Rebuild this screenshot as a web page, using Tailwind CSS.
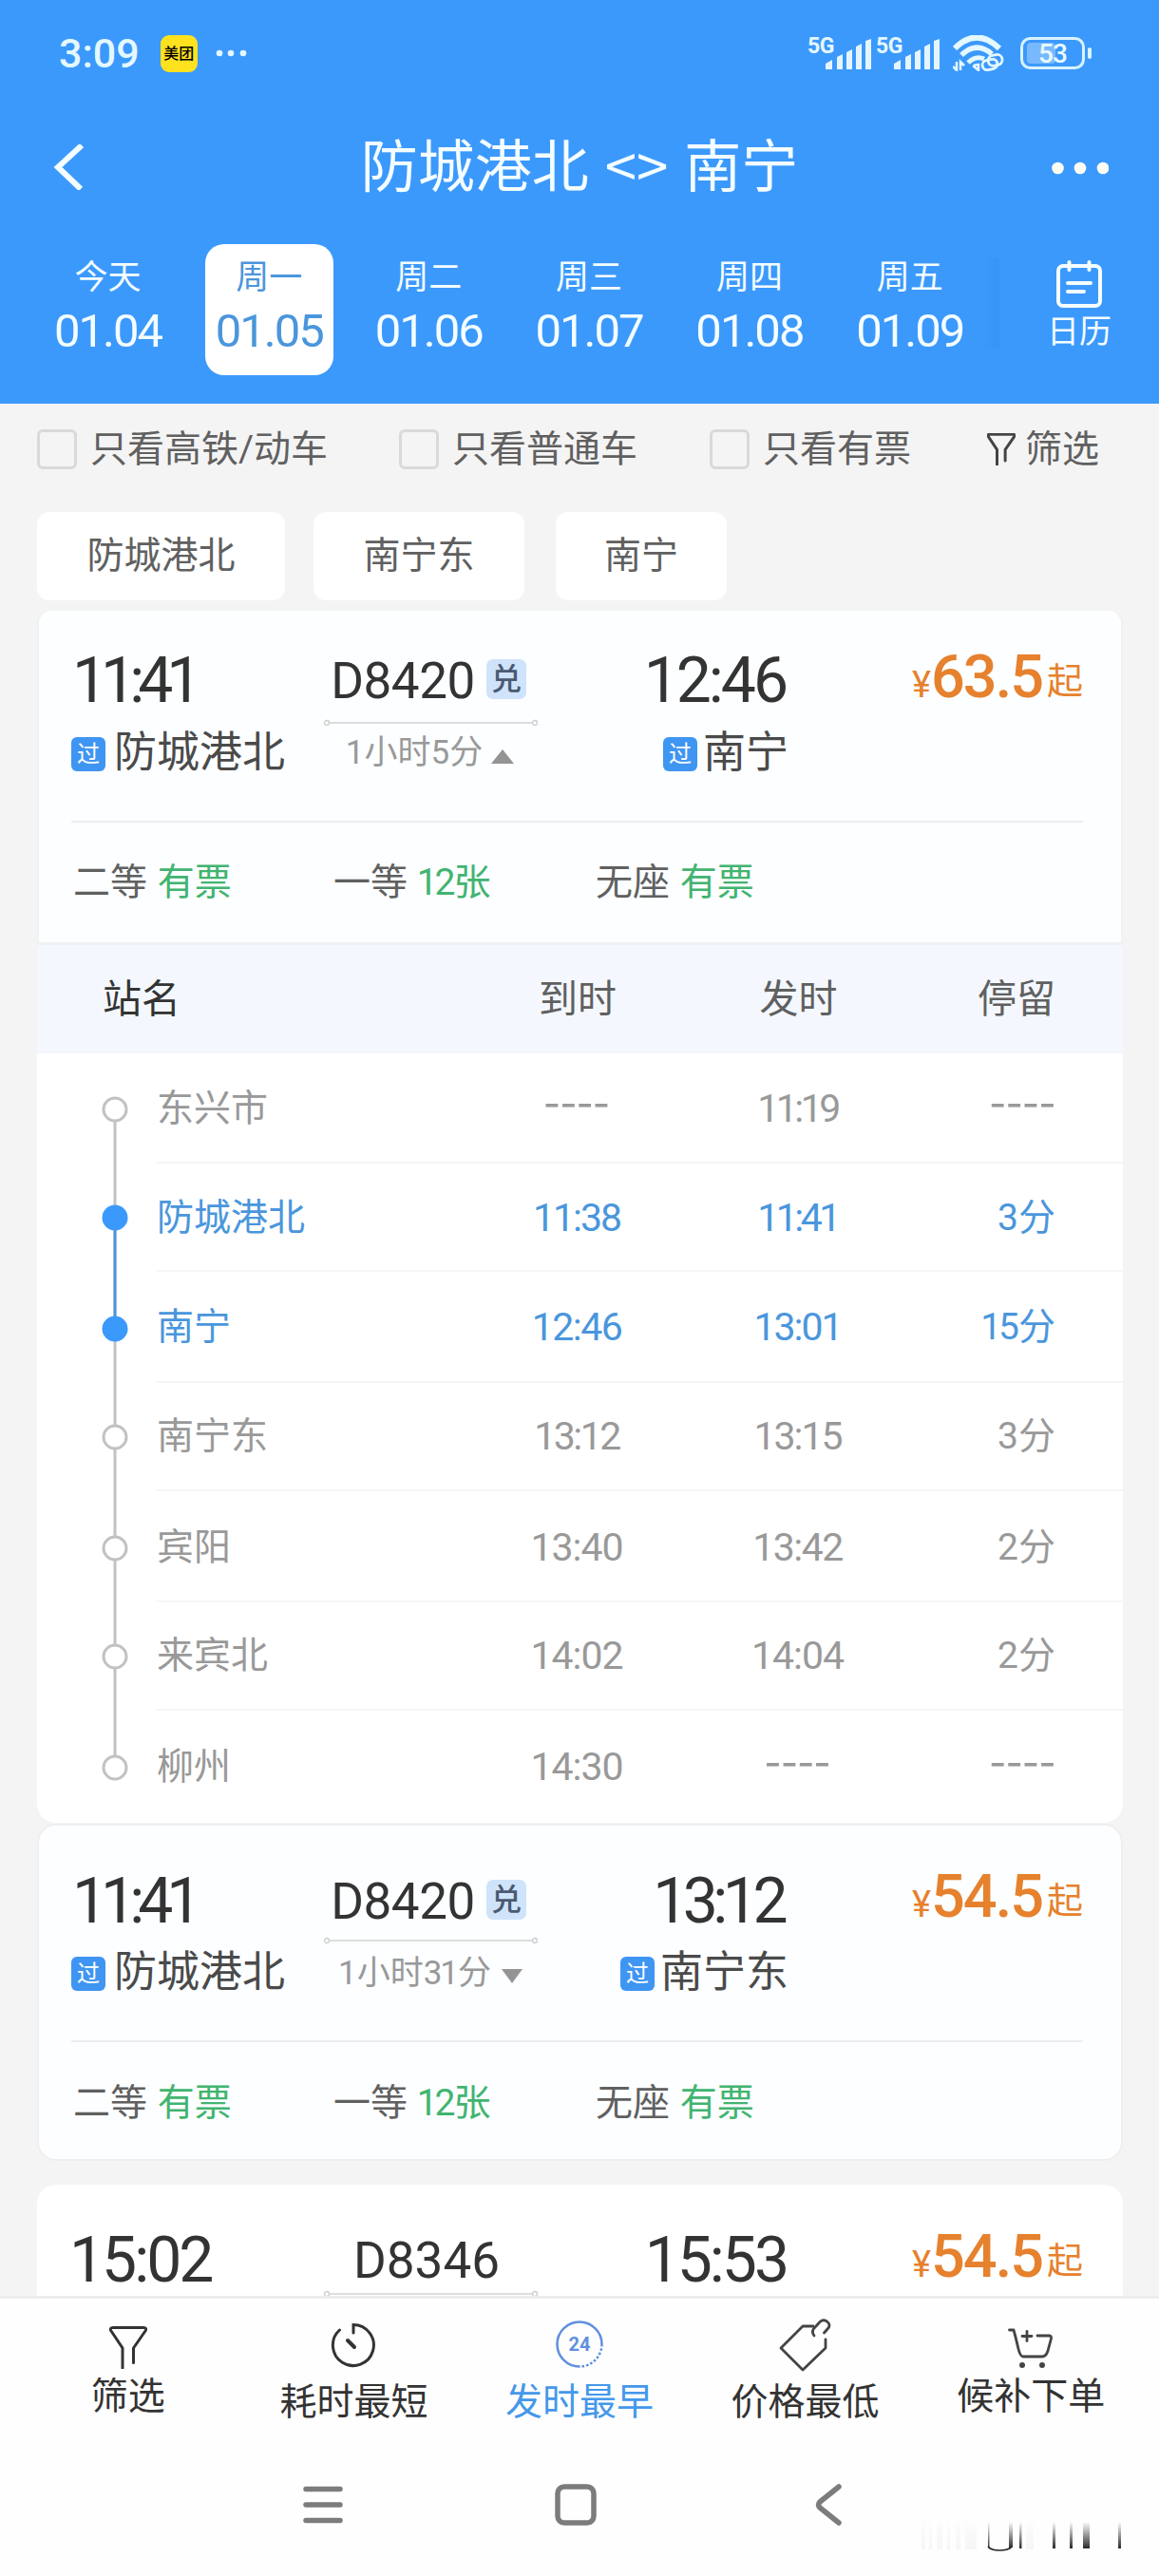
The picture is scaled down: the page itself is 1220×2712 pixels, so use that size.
<!DOCTYPE html>
<html lang="zh-CN">
<head>
    <meta charset="UTF-8">
    <meta name="viewport" content="width=device-width, initial-scale=1.0">
    <title>防城港北 - 南宁</title>
    <script src="https://cdn.jsdelivr.net/npm/@tailwindcss/browser@4"></script>
    <style>
        body {
            font-family: Roboto, 'Noto Sans CJK SC', sans-serif;
        }
    </style>
</head>
<body class="bg-[#f4f4f4] w-[1220px] h-[2712px] overflow-hidden flex flex-col leading-none text-[#333]">

    <svg class="hidden">
        <symbol id="funnel" viewBox="0 0 40 45"><path d="M14 44V23L2 5Q0 1.500 4 1.500H36Q40 1.500 38 5L25.500 23V38.500" fill="none" stroke="currentColor" stroke-linecap="round" stroke-linejoin="round"/></symbol>
        <symbol id="bars" viewBox="0 0 48 32"><path d="M0 32V26L7 22V32ZM12 32V19L18 16V32ZM22 32V14L28 11V32ZM32 32V8L38 5V32ZM42 32V2L48 0V32Z" fill="#e4f5ff"/></symbol>
        <symbol id="route" viewBox="0 0 227 8"><path d="M7 4H220" stroke="#d2d2d2" stroke-width="1.500"/><circle cx="4" cy="4" r="2.500" fill="none" stroke="#cdcdcd" stroke-width="1.300"/><circle cx="223" cy="4" r="2.500" fill="none" stroke="#cdcdcd" stroke-width="1.300"/></symbol>
    </svg>

    <header class="h-[425px] shrink-0 bg-[#3c99fc] text-[#f4fdff]">
        <!-- status bar -->
        <div class="h-[112px] pl-[62px] pr-[71px] flex items-center text-[#e4f8ff]">
            <span class="text-[43px] font-medium mt-[1px]">3:09</span>
            <span class="ml-[22px] size-[39px] rounded-[9px] bg-[#ffe21f] text-black text-[16px] font-medium flex items-center justify-center pt-[2px]">美团</span>
            <svg class="ml-[19px] w-[34px] h-[8px]" viewBox="0 0 34 8" fill="currentColor"><circle cx="4" cy="4" r="3.300"/><circle cx="16" cy="4" r="3.300"/><circle cx="29" cy="4" r="3.300"/></svg>
            <div class="ml-auto flex items-center">
                <div class="relative w-[72px] h-[38px]">
                    <span class="absolute left-[-2px] top-0 text-[23px] font-bold tracking-[-0.5px]">5G</span>
                    <svg class="absolute left-[17px] top-[4px] w-[48px] h-[32px]"><use href="#bars"/></svg>
                </div>
                <div class="relative w-[79px] h-[38px]">
                    <span class="absolute left-[-2px] top-0 text-[23px] font-bold tracking-[-0.5px]">5G</span>
                    <svg class="absolute left-[17px] top-[4px] w-[48px] h-[32px]"><use href="#bars"/></svg>
                </div>
                <svg class="w-[54px] h-[38px]" viewBox="0 0 54 38" fill="none" stroke="currentColor">
                    <path d="M2 14Q25-9 49 14" stroke-width="6"/>
                    <path d="M9 21Q25 6 41 20" stroke-width="5.500"/>
                    <path d="M16 29Q24 21 33 25" stroke-width="5"/>
                    <path d="M4 28V37L0 33M8 37V28L12 32M27 31Q22 31 22 33L27 37Z" stroke-width="2.500"/>
                    <rect x="31" y="26" width="16" height="10" rx="5" stroke-width="2.800" transform="rotate(-12 39 31)"/>
                    <rect x="37" y="21" width="15" height="11" rx="5.500" stroke-width="2.800" transform="rotate(-12 44 26)"/>
                </svg>
                <svg class="ml-[17px] w-[76px] h-[34px] mr-[-1px]" viewBox="0 0 76 34">
                    <rect x="1.500" y="1.500" width="65" height="31" rx="9" fill="none" stroke="#d8f3ff" stroke-width="3"/>
                    <rect x="7" y="6" width="30" height="22" rx="4" fill="#78b9fd"/>
                    <rect x="71" y="11" width="4" height="12" rx="2" fill="#d8f3ff"/>
                    <text x="34" y="27" text-anchor="middle" font-size="28" font-weight="500" fill="#e8faff" letter-spacing="-1">53</text>
                </svg>
            </div>
        </div>

        <!-- title -->
        <div class="h-[130px] px-[53px] flex items-center justify-between">
            <svg class="w-[38px] h-[48px] mt-[-2px]" viewBox="0 0 38 48" fill="none" stroke="currentColor" stroke-width="6"><path d="M33 1L8 24L32 47"/></svg>
            <h1 class="text-[60px] font-normal mr-[-22px] flex items-center">防城港北<span class="mx-[17px] font-['Noto_Sans_CJK_SC'] mt-[-11px]">&lt;&gt;</span>南宁</h1>
            <svg class="w-[60px] h-[14px]" viewBox="0 0 60 14" fill="#fdfdf4"><circle cx="6.500" cy="7" r="6.300"/><circle cx="30" cy="7" r="6.300"/><circle cx="54" cy="7" r="6.300"/></svg>
        </div>

        <!-- dates -->
        <div class="h-[183px] pl-[29px] pt-[15px] flex">
            <div class="w-[169px] h-[138px] flex flex-col items-center pt-[18px]"><span class="text-[35px]">今天</span><span class="text-[49px] mt-[14px] tracking-[-2px]">01.04</span></div>
            <div class="w-[169px] pl-[18px] pr-[16px]">
                <div class="h-[138px] bg-white rounded-[20px] text-[#4a96dc] flex flex-col items-center pt-[18px]"><span class="text-[35px]">周一</span><span class="text-[49px] mt-[14px] tracking-[-2px]">01.05</span></div>
            </div>
            <div class="w-[169px] h-[138px] flex flex-col items-center pt-[18px]"><span class="text-[35px]">周二</span><span class="text-[49px] mt-[14px] tracking-[-2px]">01.06</span></div>
            <div class="w-[169px] h-[138px] flex flex-col items-center pt-[18px]"><span class="text-[35px]">周三</span><span class="text-[49px] mt-[14px] tracking-[-2px]">01.07</span></div>
            <div class="w-[169px] h-[138px] flex flex-col items-center pt-[18px]"><span class="text-[35px]">周四</span><span class="text-[49px] mt-[14px] tracking-[-2px]">01.08</span></div>
            <div class="w-[169px] h-[138px] flex flex-col items-center pt-[18px]"><span class="text-[35px]">周五</span><span class="text-[49px] mt-[14px] tracking-[-2px]">01.09</span></div>
            <div class="w-[18px] -ml-[8px] h-[96px] mt-[14px] bg-linear-to-r from-[#3c99fc] to-[#3893f5]"></div>
            <div class="w-[168px] flex flex-col items-center pt-[17px]">
                <svg class="w-[50px] h-[50px]" viewBox="0 0 50 50" fill="none" stroke="currentColor" stroke-width="4" stroke-linecap="round"><rect x="3" y="6" width="44" height="42" rx="5"/><path d="M14.500 2V10M35.500 2V10M13 24H37M13 33H30"/></svg>
                <span class="text-[34px] mt-[8px]">日历</span>
            </div>
        </div>
    </header>

    <!-- filters -->
    <div class="h-[96px] shrink-0 pl-[39px] flex items-center text-[39px] text-[#606060]">
        <span class="size-[42px] border-3 border-[#d9d9d9] rounded-[6px]"></span>
        <span class="ml-[14px] w-[325px]">只看高铁/动车</span>
        <span class="size-[42px] border-3 border-[#d9d9d9] rounded-[6px]"></span>
        <span class="ml-[14px] w-[271px]">只看普通车</span>
        <span class="size-[42px] border-3 border-[#d9d9d9] rounded-[6px]"></span>
        <span class="ml-[14px] w-[236px]">只看有票</span>
        <svg class="w-[30px] h-[34px] text-[#444]" stroke-width="4"><use href="#funnel"/></svg>
        <span class="ml-[10px]">筛选</span>
    </div>

    <div class="h-[122px] shrink-0 pl-[39px] pt-[18px] flex text-[39px] text-[#606060]">
        <span class="w-[261px] h-[93px] bg-white rounded-[13px] flex items-center justify-center">防城港北</span>
        <span class="w-[222px] h-[93px] bg-white rounded-[13px] flex items-center justify-center ml-[30px]">南宁东</span>
        <span class="w-[180px] h-[93px] bg-white rounded-[13px] flex items-center justify-center ml-[33px]">南宁</span>
    </div>

    <main class="h-[1774px] shrink-0 pl-[39px] pr-[38px] overflow-hidden">

        <!-- train, expanded -->
        <div class="h-[352px] pl-[34px] pr-[40px] pt-[42px] border-x-2 border-b-3 border-[#eff1f2] bg-[#fcfeff] rounded-t-[14px]">
            <div class="grid grid-cols-[262px_233px_260px_310px] h-[179px]">
                <div>
                    <div class="h-[64px] pl-[1px] flex items-center text-[66px] tracking-[-7px]">11:41</div>
                    <div class="h-[48px] mt-[19px] flex items-center text-[45px] text-[#4a4a4a]"><span class="size-[36px] mr-[9px] mt-[4px] rounded-[6px] bg-[#3f95f2] text-white text-[24px] flex items-center justify-center">过</span>防城港北</div>
                </div>
                <div class="flex flex-col items-center">
                    <div class="h-[64px] pr-[5px] flex items-center text-[53px] tracking-[-0.5px]">D8420<span class="size-[42px] ml-[12px] mb-[4px] rounded-[7px] bg-[#cfe3fb] text-[#4a5a70] text-[32px] font-medium flex items-center justify-center">兑</span></div>
                    <svg class="w-[227px] h-[8px] mt-[8px]"><use href="#route"/></svg>
                    <div class="h-[48px] mt-[3px] pr-[2px] flex items-center text-[35px] text-[#999]">1小时5分<svg class="w-[24px] h-[15px] ml-[9px] mt-[8px]" viewBox="0 0 24 15"><path d="M12 0L24 15H0Z" fill="#949494"/></svg></div>
                </div>
                <div class="flex flex-col items-end">
                    <div class="h-[64px] pr-[3px] flex items-center text-[66px] tracking-[-3px]">12:46</div>
                    <div class="h-[48px] mt-[19px] flex items-center text-[45px] text-[#4a4a4a]"><span class="size-[36px] mr-[6px] mt-[4px] rounded-[6px] bg-[#3f95f2] text-white text-[24px] flex items-center justify-center">过</span>南宁</div>
                </div>
                <div class="h-[58px] mt-[-4px] flex items-baseline justify-end text-[#e6812d]"><span class="text-[38px]">¥</span><span class="text-[63px] font-medium tracking-[-2px]">63.5</span><span class="text-[38px] ml-[5px] -translate-y-[4px]">起</span></div>
            </div>
            <div class="h-[128px] border-t-2 border-[#ebedef] flex items-center text-[39px] text-[#606060]">
                <span class="w-[276px] pl-[2px]">二等 <span class="text-[#42b470] ml-[1px]">有票</span></span>
                <span class="w-[276px]">一等 <span class="text-[#42b470]"><span class="tracking-[-3px] mr-[1px]">12</span>张</span></span>
                <span>无座 <span class="text-[#42b470] ml-[1px]">有票</span></span>
            </div>
        </div>

        <!-- stop list -->
        <div class="bg-white rounded-b-[20px] h-[924px] mb-[1px]">
            <div class="h-[114px] bg-[#f4f8fe] pl-[69px] grid grid-cols-[375px_250px_215px_163px] items-center text-[41px] text-[#606060]">
                <span class="text-[#333]">站名</span><span class="text-center">到时</span><span class="text-center">发时</span><span class="text-right">停留</span>
            </div>
            <div class="relative text-[39px] text-[#999]">
                <svg class="absolute left-[66px] top-0 w-[32px] h-[810px]" viewBox="0 0 32 810">
                    <path d="M16 59V752" stroke="#c2c2c2" stroke-width="3"/>
                    <path d="M16 173V290" stroke="#4a96dc" stroke-width="3"/>
                    <g fill="#fff" stroke="#c2c2c2" stroke-width="3"><circle cx="16" cy="59" r="12"/><circle cx="16" cy="404" r="12"/><circle cx="16" cy="521" r="12"/><circle cx="16" cy="635" r="12"/><circle cx="16" cy="752" r="12"/></g>
                    <g fill="#3c99fc"><circle cx="16" cy="173" r="13.500"/><circle cx="16" cy="290" r="13.500"/></g>
                </svg>
                <div class="ml-[126px] pt-[2px] h-[116px] border-b-2 border-[#f5f5f5] grid grid-cols-[317px_250px_215px_164px] items-center">
                    <span>东兴市</span><span class="text-center font-['Noto_Sans_CJK_SC'] text-[50px] pb-[22px]">----</span><span class="text-center text-[41px] tracking-[-3.500px]">11:19</span><span class="text-right font-['Noto_Sans_CJK_SC'] text-[50px] pb-[22px]">----</span>
                </div>
                <div class="ml-[126px] pt-[2px] h-[114px] border-b-2 border-[#f5f5f5] grid grid-cols-[317px_250px_215px_164px] items-center text-[#4a96dc]">
                    <span>防城港北</span><span class="text-center text-[41px] tracking-[-2px]">11:38</span><span class="text-center text-[41px] tracking-[-3.500px]">11:41</span><span class="text-right">3分</span>
                </div>
                <div class="ml-[126px] pt-[2px] h-[117px] border-b-2 border-[#f5f5f5] grid grid-cols-[317px_250px_215px_164px] items-center text-[#4a96dc]">
                    <span>南宁</span><span class="text-center text-[41px] tracking-[-1.500px]">12:46</span><span class="text-center text-[41px] tracking-[-2px]">13:01</span><span class="text-right"><span class="tracking-[-3px] mr-[2px]">15</span>分</span>
                </div>
                <div class="ml-[126px] pt-[1px] h-[114px] border-b-2 border-[#f5f5f5] grid grid-cols-[317px_250px_215px_164px] items-center">
                    <span>南宁东</span><span class="text-center text-[41px] tracking-[-2.500px]">13:12</span><span class="text-center text-[41px] tracking-[-2px]">13:15</span><span class="text-right">3分</span>
                </div>
                <div class="ml-[126px] pt-[3px] h-[117px] border-b-2 border-[#f5f5f5] grid grid-cols-[317px_250px_215px_164px] items-center">
                    <span>宾阳</span><span class="text-center text-[41px] tracking-[-1px]">13:40</span><span class="text-center text-[41px] tracking-[-1.500px]">13:42</span><span class="text-right">2分</span>
                </div>
                <div class="ml-[126px] pt-[1px] h-[114px] border-b-2 border-[#f5f5f5] grid grid-cols-[317px_250px_215px_164px] items-center">
                    <span>来宾北</span><span class="text-center text-[41px] tracking-[-1px]">14:02</span><span class="text-center text-[41px] tracking-[-1px]">14:04</span><span class="text-right">2分</span>
                </div>
                <div class="ml-[126px] pt-[2px] h-[117px] grid grid-cols-[317px_250px_215px_164px] items-center">
                    <span>柳州</span><span class="text-center text-[41px] tracking-[-1px]">14:30</span><span class="text-center font-['Noto_Sans_CJK_SC'] text-[50px] pb-[22px]">----</span><span class="text-right font-['Noto_Sans_CJK_SC'] text-[50px] pb-[22px]">----</span>
                </div>
            </div>
        </div>

        <!-- train -->
        <div class="h-[355px] pl-[34px] pr-[40px] pt-[48px] border-2 border-[#efefef] bg-[#fcfeff] rounded-[20px]">
            <div class="grid grid-cols-[262px_233px_260px_310px] h-[178px]">
                <div>
                    <div class="h-[64px] pl-[1px] flex items-center text-[66px] tracking-[-7px]">11:41</div>
                    <div class="h-[48px] mt-[18px] flex items-center text-[45px] text-[#4a4a4a]"><span class="size-[36px] mr-[9px] mt-[4px] rounded-[6px] bg-[#3f95f2] text-white text-[24px] flex items-center justify-center">过</span>防城港北</div>
                </div>
                <div class="flex flex-col items-center">
                    <div class="h-[64px] pr-[5px] flex items-center text-[53px] tracking-[-0.5px]">D8420<span class="size-[42px] ml-[12px] mb-[4px] rounded-[7px] bg-[#cfe3fb] text-[#4a5a70] text-[32px] font-medium flex items-center justify-center">兑</span></div>
                    <svg class="w-[227px] h-[8px] mt-[5px]"><use href="#route"/></svg>
                    <div class="h-[48px] mt-[6px] pr-[1px] flex items-center text-[35px] text-[#999]"><span>1小时<span class="tracking-[-2px] mr-[1px]">31</span>分</span><svg class="w-[22px] h-[15px] ml-[11px] mt-[6px]" viewBox="0 0 22 15"><path d="M0 0H22L11 15Z" fill="#949494"/></svg></div>
                </div>
                <div class="flex flex-col items-end">
                    <div class="h-[64px] pr-[6px] flex items-center text-[66px] tracking-[-5.5px]">13:12</div>
                    <div class="h-[48px] mt-[18px] flex items-center text-[45px] text-[#4a4a4a]"><span class="size-[36px] mr-[6px] mt-[4px] rounded-[6px] bg-[#3f95f2] text-white text-[24px] flex items-center justify-center">过</span>南宁东</div>
                </div>
                <div class="h-[58px] mt-[-5px] flex items-baseline justify-end text-[#e6812d]"><span class="text-[38px]">¥</span><span class="text-[63px] font-medium tracking-[-2px]">54.5</span><span class="text-[38px] ml-[5px] -translate-y-[4px]">起</span></div>
            </div>
            <div class="h-[125px] pt-[6px] border-t-2 border-[#ebedef] flex items-center text-[39px] text-[#606060]">
                <span class="w-[276px] pl-[2px]">二等 <span class="text-[#42b470] ml-[1px]">有票</span></span>
                <span class="w-[276px]">一等 <span class="text-[#42b470]"><span class="tracking-[-3px] mr-[1px]">12</span>张</span></span>
                <span>无座 <span class="text-[#42b470] ml-[1px]">有票</span></span>
            </div>
        </div>

        <!-- train, cut by the bottom bar -->
        <div class="h-[200px] mt-[25px] px-[36px] pt-[48px] bg-white rounded-t-[20px]">
            <div class="grid grid-cols-[262px_233px_260px_310px]">
                <div class="h-[64px] flex items-center text-[66px] tracking-[-3px]"><span class="-ml-[2px]">15:02</span></div>
                <div class="flex flex-col items-center">
                    <div class="h-[64px] pr-[9px] flex items-center text-[53px]">D8346</div>
                    <svg class="w-[227px] h-[8px] -mt-[1px]"><use href="#route"/></svg>
                </div>
                <div class="h-[64px] pr-[2px] flex items-center justify-end text-[66px] tracking-[-3px]">15:53</div>
                <div class="h-[58px] mt-[-4px] flex items-baseline justify-end text-[#e6812d]"><span class="text-[38px]">¥</span><span class="text-[63px] font-medium tracking-[-2px]">54.5</span><span class="text-[38px] ml-[5px] -translate-y-[4px]">起</span></div>
            </div>
        </div>
    </main>

    <footer class="flex-1 bg-[#fefefe] border-t-3 border-[#ededed]">
        <div class="h-[150px] px-[16px] grid grid-cols-5 text-[39px]">
            <div class="flex flex-col items-center pt-[29px]">
                <svg class="w-[40px] h-[45px]" stroke-width="3"><use href="#funnel"/></svg>
                <span class="mt-[10px]">筛选</span>
            </div>
            <div class="flex flex-col items-center pt-[25px]">
                <svg class="w-[48px] h-[48px]" viewBox="0 0 48 48" fill="none" stroke="currentColor" stroke-width="3" stroke-linecap="round"><path d="M24 11V2.500A21.500 21.500 0 1 1 9.500 8"/><path d="M18 19L25 26" stroke-width="4"/></svg>
                <span class="mt-[17px]">耗时最短</span>
            </div>
            <div class="flex flex-col items-center pt-[23px] text-[#4598ea]">
                <svg class="w-[50px] h-[50px]" viewBox="0 0 50 50" fill="none" stroke="#6090de" stroke-width="2.500"><path d="M25 48.500A23.500 23.500 0 1 1 48.500 25"/><path d="M48.500 25A23.500 23.500 0 0 1 25 48.500" stroke-dasharray="2.500 2"/><text x="25" y="32" text-anchor="middle" font-size="20" font-weight="700" fill="#6090de" stroke="none">24</text></svg>
                <span class="mt-[17px]">发时最早</span>
            </div>
            <div class="flex flex-col items-center pt-[21px]">
                <svg class="w-[56px] h-[56px]" viewBox="0 0 56 56" fill="none" stroke="#444" stroke-width="2.800" stroke-linecap="round" stroke-linejoin="round"><path d="M36 8H25L2 31L25 54L49 31V22"/><path d="M37 18Q33 13 39 8L43 3.500Q47 0 51 3.500Q55 7 51 11L47.500 15"/></svg>
                <span class="mt-[13px]">价格最低</span>
            </div>
            <div class="flex flex-col items-center pt-[31px]">
                <svg class="w-[48px] h-[43px]" viewBox="0 0 48 43" fill="none" stroke="#444" stroke-width="2.800" stroke-linecap="round" stroke-linejoin="round"><path d="M1.500 2H6Q8 9 11 22Q13 30 16 30H36Q40 30 42 24L45.500 11Q46 8 43 8H31M15 8.500H25M20 3.500V13.500"/><circle cx="15" cy="39" r="1.600" fill="#333"/><circle cx="36" cy="39" r="1.600" fill="#333"/></svg>
                <span class="mt-[10px]">候补下单</span>
            </div>
        </div>

        <!-- system navigation -->
        <div class="relative h-[130px] pl-[318px] pt-[44px] flex text-[#7c7c7c]">
            <svg class="w-[44px] h-[46px]" viewBox="0 0 44 46" stroke="currentColor" stroke-width="5.500" stroke-linecap="round"><path d="M4 6.500H40M4 23H40M4 39.500H40"/></svg>
            <svg class="ml-[221px] w-[46px] h-[46px]" viewBox="0 0 46 46" fill="none" stroke="currentColor" stroke-width="5.500"><rect x="4" y="4" width="38" height="38" rx="7"/></svg>
            <svg class="ml-[228px] w-[30px] h-[46px]" viewBox="0 0 30 46" fill="none" stroke="currentColor" stroke-width="5.500" stroke-linecap="round" stroke-linejoin="round"><path d="M26 4L6 20Q3 23 6 26L26 42"/></svg>
            <svg class="absolute left-[968px] top-[77px] w-[216px] h-[40px]" viewBox="0 0 216 40">
                <defs>
                    <linearGradient id="fade" x1="0" y1="0" x2="0" y2="1"><stop offset="0" stop-color="#222" stop-opacity="0"/><stop offset="1" stop-color="#111" stop-opacity=".9"/></linearGradient>
                    <linearGradient id="pale" x1="0" y1="0" x2="0" y2="1"><stop offset="0" stop-color="#eee" stop-opacity="0"/><stop offset="1" stop-color="#f2f2f2" stop-opacity=".7"/></linearGradient>
                </defs>
                <path d="M2 6h4v31h-4zM10 6h3v31h-3zM18 6h6v31h-6zM29 6h3v31h-3zM38 6h5v31h-5zM48 6h12v31h-12zM112 6h8v31h-8z" fill="url(#pale)"/>
                <path d="M72 8h1.500v27h-1.500zM94 8h4v27h-4zM105 8h2.500v28h-2.500zM140 8h3v28h-3zM158 8h3v28h-3zM172 8h7v28h-7zM209 8h3v28h-3z" fill="url(#fade)"/>
                <path d="M72 34Q75 38 84 38Q94 38 97 34" fill="none" stroke="#222" stroke-width="1.500"/>
            </svg>
        </div>
    </footer>

</body>
</html>
